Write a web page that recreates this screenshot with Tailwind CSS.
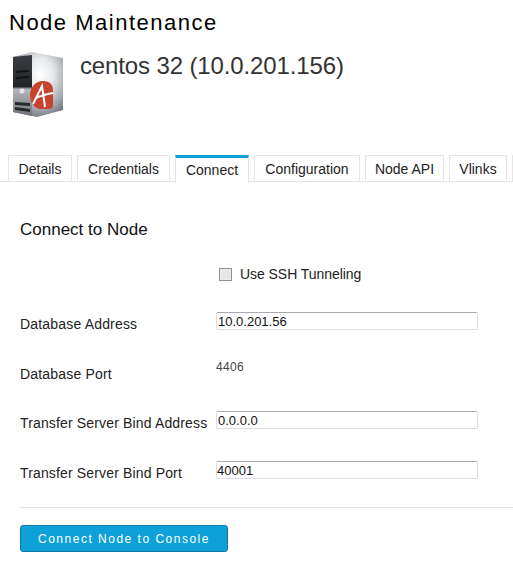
<!DOCTYPE html>
<html lang="en">

<head>
  <meta charset="UTF-8">
  <title>Node Maintenance</title>
  <script src="https://cdn.jsdelivr.net/npm/@tailwindcss/browser@4"></script>
</head>

<body class="w-[513px] h-[561px] overflow-hidden bg-white font-['Liberation_Sans',Arial,sans-serif] text-[14px] text-[#222]">
  <h1 class="pl-[9px] pt-[9px] h-[52px] text-[22px] leading-[27px] tracking-[1.5px] text-black">Node Maintenance</h1>

  <div class="flex h-[103px]">
    <svg class="ml-[12px] w-[52px] h-[65px] shrink-0" viewBox="0 0 52 65">
      <defs>
        <radialGradient id="side" cx="0.55" cy="0.35" r="0.75">
          <stop offset="0" stop-color="#ffffff" />
          <stop offset="0.35" stop-color="#e4e7ea" />
          <stop offset="0.7" stop-color="#a3a9af" />
          <stop offset="1" stop-color="#5b6168" />
        </radialGradient>
        <linearGradient id="front" x1="0" y1="0" x2="0" y2="1">
          <stop offset="0" stop-color="#3a3d41" />
          <stop offset="0.52" stop-color="#222428" />
          <stop offset="0.56" stop-color="#b4b8bc" />
          <stop offset="0.8" stop-color="#8f9397" />
          <stop offset="1" stop-color="#6f7377" />
        </linearGradient>
      </defs>
      <path d="M1 5 L20 0 L51 6 V58 L25 65 L1 60 Z" fill="url(#side)" />
      <path d="M1 5 L20 3 V64 L1 60 Z" fill="url(#front)" />
      <path d="M4 19 L17 18 V20 L4 21 Z M4 25 L17 24 V26 L4 27 Z" fill="#111214" />
      <circle cx="10" cy="39" r="2.5" fill="#e4e6e8" />
      <path d="M3 50 L18 51 V54 L3 53 Z M3 55 L18 57 V60 L3 58 Z" fill="#26282b" />
      <path d="M31 29 C38 29 41 33 41 38 V53 C41 56 39 57 36 57 H28 C22 56 18 50 18 43 C18 35 24 29 31 29 Z" fill="#c8432e" />
      <path d="M21 52 L30 34 L33 55 M24 46 C30 43 36 42 41 41" fill="none" stroke="#fff" stroke-width="2" />
    </svg>
    <div class="ml-[16px] text-[24px] leading-[27px] tracking-[-0.13px] text-[#333]">centos 32 (10.0.201.156)</div>
  </div>

  <nav class="flex h-[27px] pl-[8px] gap-[5px] border-b border-[#e5e5e5] text-[14px] leading-[26px] text-[#222]">
    <a class="shrink-0 w-[64px] h-[27px] text-center border border-b-0 border-[#e5e5e5]">Details</a>
    <a class="shrink-0 w-[93px] h-[27px] text-center border border-b-0 border-[#e5e5e5]">Credentials</a>
    <a class="shrink-0 w-[74px] h-[28px] text-center border-x border-[#e5e5e5] border-t-[3px] border-t-[#0ea0d8] bg-white leading-[24px]">Connect</a>
    <a class="shrink-0 w-[106px] h-[27px] text-center border border-b-0 border-[#e5e5e5]">Configuration</a>
    <a class="shrink-0 w-[79px] h-[27px] text-center border border-b-0 border-[#e5e5e5]">Node API</a>
    <a class="shrink-0 w-[58px] h-[27px] text-center border border-b-0 border-[#e5e5e5]">Vlinks</a>
    <a class="shrink-0 w-[10px] h-[27px] border border-b-0 border-[#e5e5e5]"></a>
  </nav>

  <main class="pl-[20px]">
    <h2 class="mt-[38px] h-[44px] text-[17px] leading-[20px] text-[#111]">Connect to Node</h2>

    <label class="ml-[199px] flex items-center h-[20px] mb-[28px]">
      <input type="checkbox" class="appearance-none w-[13px] h-[13px] border border-[#8f8f8f] bg-[#e6e6e6] shadow-[inset_0_0_2px_#fff]">
      <span class="ml-[8px] tracking-[-0.05px]">Use SSH Tunneling</span>
    </label>

    <div class="flex items-start h-[50px]">
      <span class="w-[196px] pt-[3px] leading-[18px] tracking-[0.18px]">Database Address</span>
      <input value="10.0.201.56" class="w-[262px] h-[18px] border border-[#dcdce2] border-t-[#a9a9b0] rounded-[2px] px-[1px] text-[13px] leading-[16px] text-[#111]">
    </div>
    <div class="flex items-start h-[49px]">
      <span class="w-[196px] pt-[3px] leading-[18px] tracking-[0.18px]">Database Port</span>
      <span class="text-[12px] leading-[14px] -mt-[2px] tracking-[0.3px] text-[#444]">4406</span>
    </div>
    <div class="flex items-start h-[50px]">
      <span class="w-[196px] pt-[3px] leading-[18px] tracking-[0.15px] whitespace-nowrap">Transfer Server Bind Address</span>
      <input value="0.0.0.0" class="w-[262px] h-[18px] border border-[#dcdce2] border-t-[#a9a9b0] rounded-[2px] px-[1px] text-[13px] leading-[16px] text-[#111]">
    </div>
    <div class="flex items-start h-[46px]">
      <span class="w-[196px] pt-[3px] leading-[18px] tracking-[0.15px]">Transfer Server Bind Port</span>
      <input value="40001" class="w-[262px] h-[18px] border border-[#dcdce2] border-t-[#a9a9b0] rounded-[2px] px-[0px] text-[13px] leading-[16px] text-[#111]">
    </div>

    <hr class="border-[#e5e5e5] mb-[17px]">

    <button class="block w-[208px] h-[27px] bg-[#0ea0d8] border border-[#0c7ba6] rounded-[3px] text-white text-[12px] tracking-[1.5px] text-center">Connect Node to Console</button>
  </main>
</body>

</html>
